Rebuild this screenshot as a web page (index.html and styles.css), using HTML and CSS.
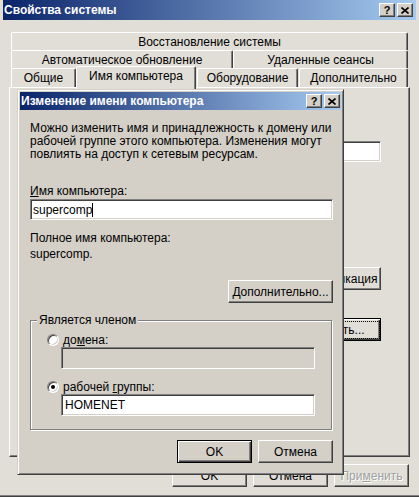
FILE: index.html
```html
<!DOCTYPE html>
<html lang="ru">

<head>
    <meta charset="UTF-8">
    <title>Свойства системы</title>
    <link rel="stylesheet" href="styles.css">
</head>

<body>
    <div class="window">
        <div class="caption">
            <span class="caption-title">Свойства системы</span>
            <div class="caption-buttons">
                <span class="cap-btn help">?</span>
                <span class="cap-btn">
                    <svg width="8" height="7" viewBox="0 0 8 7"><path d="M0.5 0.5L7.5 6.5M7.5 0.5L0.5 6.5" stroke="#000" stroke-width="1.6" fill="none"/></svg>
                </span>
            </div>
        </div>

        <div class="window-body">
            <div class="tabs">
                <div class="tab-row">
                    <div class="tab tab-restore">Восстановление системы</div>
                </div>
                <div class="tab-row">
                    <div class="tab tab-update">Автоматическое обновление</div>
                    <div class="tab tab-remote">Удаленные сеансы</div>
                </div>
                <div class="tab-row">
                    <div class="tab tab-general">Общие</div>
                    <div class="tab tab-name active">Имя компьютера</div>
                    <div class="tab tab-hardware">Оборудование</div>
                    <div class="tab tab-advanced">Дополнительно</div>
                </div>
            </div>

            <div class="panel">
                <div class="field panel-field"></div>
                <button class="btn btn-wide btn-ident">Идентификация</button>
                <button class="btn btn-wide btn-default btn-change"><span class="focus">Изменить...</span></button>
            </div>

            <div class="bottom-buttons">
                <button class="btn">OK</button>
                <button class="btn">Отмена</button>
                <button class="btn disabled">При<u>м</u>енить</button>
            </div>
        </div>

        <div class="dialog">
            <div class="caption">
                <span class="caption-title">Изменение имени компьютера</span>
                <div class="caption-buttons">
                    <span class="cap-btn help">?</span>
                    <span class="cap-btn">
                        <svg width="8" height="7" viewBox="0 0 8 7"><path d="M0.5 0.5L7.5 6.5M7.5 0.5L0.5 6.5" stroke="#000" stroke-width="1.6" fill="none"/></svg>
                    </span>
                </div>
            </div>

            <div class="dialog-body">
                <p class="intro">Можно изменить имя и принадлежность к домену или рабочей группе этого компьютера. Изменения могут повлиять на доступ к сетевым ресурсам.</p>

                <div class="label name-label"><u>И</u>мя компьютера:</div>
                <div class="field name-field">supercomp<span class="caret"></span></div>

                <div class="label full-label">Полное имя компьютера:</div>
                <div class="label full-value">supercomp.</div>

                <button class="btn btn-more"><u>Д</u>ополнительно...</button>

                <div class="group">
                    <span class="group-label">Является членом</span>
                    <div class="radio-row">
                        <span class="radio"></span>
                        <span>до<u>м</u>ена:</span>
                    </div>
                    <div class="field group-field disabled-field"></div>
                    <div class="radio-row second">
                        <span class="radio checked"></span>
                        <span>рабочей <u>г</u>руппы:</span>
                    </div>
                    <div class="field group-field">HOMENET</div>
                </div>

                <div class="dialog-buttons">
                    <button class="btn btn-default">OK</button>
                    <button class="btn">Отмена</button>
                </div>
            </div>
        </div>
    </div>
</body>

</html>
```

FILE: styles.css
```css
* {
    box-sizing: border-box;
}

body {
    margin: 0;
    font-family: 'Liberation Sans', Arial, sans-serif;
    font-size: 11px;
    color: #000000;
    background: #e0ded7;
}

u {
    text-decoration: underline;
    text-underline-offset: 1px;
}

.window {
    position: relative;
    width: 419px;
    height: 497px;
    background: #e0ded7;
    border-bottom: 1px solid #404040;
    box-shadow: inset 0 -1px 0 #808080;
}

.caption {
    display: flex;
    align-items: center;
    justify-content: space-between;
    height: 20px;
    margin: 0 3px;
    padding: 0 3px 0 1px;
    background: linear-gradient(90deg, #0a246a, #a6caf0);
}

.caption-title {
    color: #ffffff;
    font-weight: bold;
    font-size: 12px;
    white-space: nowrap;
}

.caption-buttons {
    display: flex;
    gap: 2px;
}

.cap-btn {
    display: flex;
    align-items: center;
    justify-content: center;
    width: 16px;
    height: 14px;
    background: #d4d0c8;
    border: 1px solid;
    border-color: #ffffff #404040 #404040 #ffffff;
    box-shadow: inset -1px -1px 0 #808080;
    font-weight: bold;
    font-size: 11px;
    line-height: 1;
}

.cap-btn.help {
    padding-top: 1px;
}

/* shared controls */
.btn {
    display: flex;
    align-items: center;
    justify-content: center;
    width: 75px;
    height: 23px;
    padding: 0;
    background: #d4d0c8;
    border: 1px solid;
    border-color: #ffffff #404040 #404040 #ffffff;
    box-shadow: inset -1px -1px 0 #808080;
    font-family: inherit;
    font-size: 12px;
    color: #000000;
    white-space: nowrap;
}

.btn-default {
    border: 1px solid #000000;
    box-shadow: inset 1px 1px 0 #ffffff, inset -1px -1px 0 #404040, inset -2px -2px 0 #808080;
}

.btn.disabled {
    color: #a0a0a0;
    text-shadow: 1px 1px 0 #ffffff;
}

.field {
    display: flex;
    align-items: center;
    height: 21px;
    padding-left: 2px;
    background: #ffffff;
    border: 1px solid;
    border-color: #808080 #ffffff #ffffff #808080;
    box-shadow: inset 1px 1px 0 #404040, inset -1px -1px 0 #d4d0c8;
    font-size: 12px;
}

.caret {
    width: 1px;
    height: 14px;
    background: #000000;
}

/* outer window */
.window-body {
    padding: 12px 9px 0 9px;
}

.window-body .btn {
    background: #e0ded7;
}

.tabs {
    padding: 0 2px;
}

.tab-row {
    display: flex;
    height: 18px;
}

.tab-row:last-child {
    height: 19px;
}

.tab {
    display: flex;
    align-items: center;
    justify-content: center;
    height: 100%;
    border: 1px solid;
    border-bottom: none;
    border-color: #ffffff #404040 transparent #ffffff;
    border-radius: 2px 2px 0 0;
    box-shadow: inset -1px 0 0 #808080;
    font-size: 12px;
    white-space: nowrap;
}

.tab-restore {
    flex: 1;
}

.tab-update {
    width: 222px;
}

.tab-remote {
    flex: 1;
}

.tab-general {
    width: 65px;
}

.tab-name {
    width: 120px;
}

.tab-hardware {
    width: 101px;
    margin-left: 1px;
}

.tab-advanced {
    flex: 1;
    margin-left: 1px;
}

.tab.active {
    position: relative;
    z-index: 1;
    height: 23px;
    margin-top: -2px;
    padding-bottom: 5px;
    background: #e0ded7;
}

.panel {
    display: flex;
    flex-direction: column;
    align-items: flex-end;
    height: 370px;
    padding: 53px 28px 0 0;
    border: 1px solid;
    border-color: #ffffff #404040 #404040 #ffffff;
    box-shadow: inset -1px -1px 0 #808080;
}

.panel-field {
    width: 280px;
    height: 21px;
}

.btn-wide {
    width: 97px;
}

.btn-ident {
    margin-top: 105px;
}

.btn-change {
    margin-top: 28px;
}

.focus {
    padding: 1px 14px;
    outline: 1px dotted #000000;
    outline-offset: 0;
}

.bottom-buttons {
    display: flex;
    justify-content: flex-end;
    gap: 6px;
    margin: 7px 1px 0 0;
}

/* dialog */
.dialog {
    position: absolute;
    left: 17px;
    top: 89px;
    width: 327px;
    padding: 2px;
    background: #d4d0c8;
    border: 1px solid;
    border-color: #d4d0c8 #404040 #404040 #d4d0c8;
    box-shadow: inset 1px 1px 0 #ffffff, inset -1px -1px 0 #808080;
}

.dialog .caption {
    margin: 0;
    height: 18px;
    padding-right: 1px;
}

.dialog-body {
    display: flex;
    flex-direction: column;
    padding: 12px 8px 9px 10px;
}

.intro {
    margin: 0;
    line-height: 13px;
    font-size: 12px;
}

.label {
    line-height: 13px;
    font-size: 12px;
}

.name-label {
    margin-top: 24px;
}

.name-field {
    margin-top: 1px;
}

.full-label {
    margin-top: 12px;
}

.full-value {
    margin-top: 3px;
}

.btn-more {
    align-self: flex-end;
    width: 105px;
    margin-top: 19px;
}

.group {
    position: relative;
    height: 110px;
    margin: 17px 1px 0 0;
    padding: 12px 0 0 16px;
    border: 1px solid #808080;
    box-shadow: 1px 1px 0 #ffffff, inset 1px 1px 0 #ffffff;
}

.group-label {
    position: absolute;
    top: -7px;
    left: 6px;
    padding: 0 2px;
    background: #d4d0c8;
    line-height: 13px;
    font-size: 12px;
}

.radio-row {
    display: flex;
    align-items: center;
    gap: 4px;
    height: 13px;
    font-size: 12px;
}

.radio-row.second {
    margin-top: 11px;
}

.radio {
    display: flex;
    align-items: center;
    justify-content: center;
    width: 12px;
    height: 12px;
    border-radius: 50%;
    background: #ffffff;
    border: 1px solid;
    border-color: #808080 #ffffff #ffffff #808080;
    box-shadow: inset 1px 1px 0 #404040, inset -1px -1px 0 #d4d0c8;
}

.radio.checked::after {
    content: '';
    width: 4px;
    height: 4px;
    border-radius: 50%;
    background: #000000;
}

.group-field {
    width: 254px;
    height: 22px;
    margin: 1px 0 0 14px;
    padding-left: 3px;
}

.disabled-field {
    background: #d4d0c8;
}

.dialog-buttons {
    display: flex;
    justify-content: flex-end;
    gap: 6px;
    margin-top: 10px;
}
```
